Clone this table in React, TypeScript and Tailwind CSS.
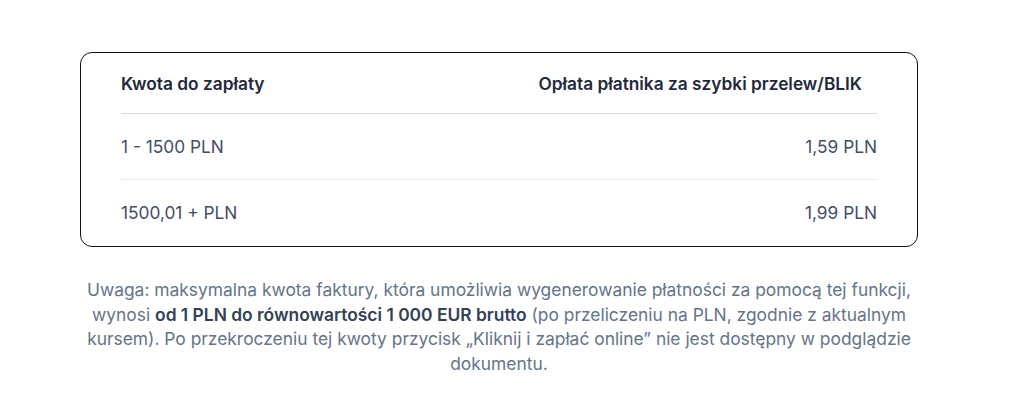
export default function App() {
  const rows = [
    { amount: "1 - 1500 PLN", fee: "1,59 PLN" },
    { amount: "1500,01 + PLN", fee: "1,99 PLN" },
  ];

  return (
    <div className="min-h-screen bg-white pt-[52px] font-['Inter','Noto_Sans',sans-serif]">
      <div className="ml-[80px] w-[838px]">
        <div className="rounded-[12px] border border-[#111111] px-[40px]">
          <div className="flex justify-between border-b border-[#d4dae2] pt-[19px] pb-[17px] text-[17.3px] leading-[24px] font-semibold text-[#1e293b]">
            <span>Kwota do zapłaty</span>
            <span className="pr-[15px]">Opłata płatnika za szybki przelew/BLIK</span>
          </div>
          {rows.map((row, i) => (
            <div
              key={row.amount}
              className={`flex h-[66px] items-center justify-between text-[17.3px] text-[#3f4e63] ${i < rows.length - 1 ? "border-b border-[#e5e9ee]" : ""}`}
            >
              <span>{row.amount}</span>
              <span>{row.fee}</span>
            </div>
          ))}
        </div>

        <p className="mt-[31px] text-center text-[17.4px] leading-[24.5px] text-[#64748b]">
          Uwaga: maksymalna kwota faktury, która umożliwia wygenerowanie płatności za pomocą tej funkcji, wynosi{" "}
          <span className="font-semibold text-[#334155]">od 1 PLN do równowartości 1 000 EUR brutto</span> (po przeliczeniu na PLN,
          zgodnie z aktualnym kursem). Po przekroczeniu tej kwoty przycisk „Kliknij i zapłać online” nie jest dostępny w
          podglądzie dokumentu.
        </p>
      </div>
    </div>
  );
}
